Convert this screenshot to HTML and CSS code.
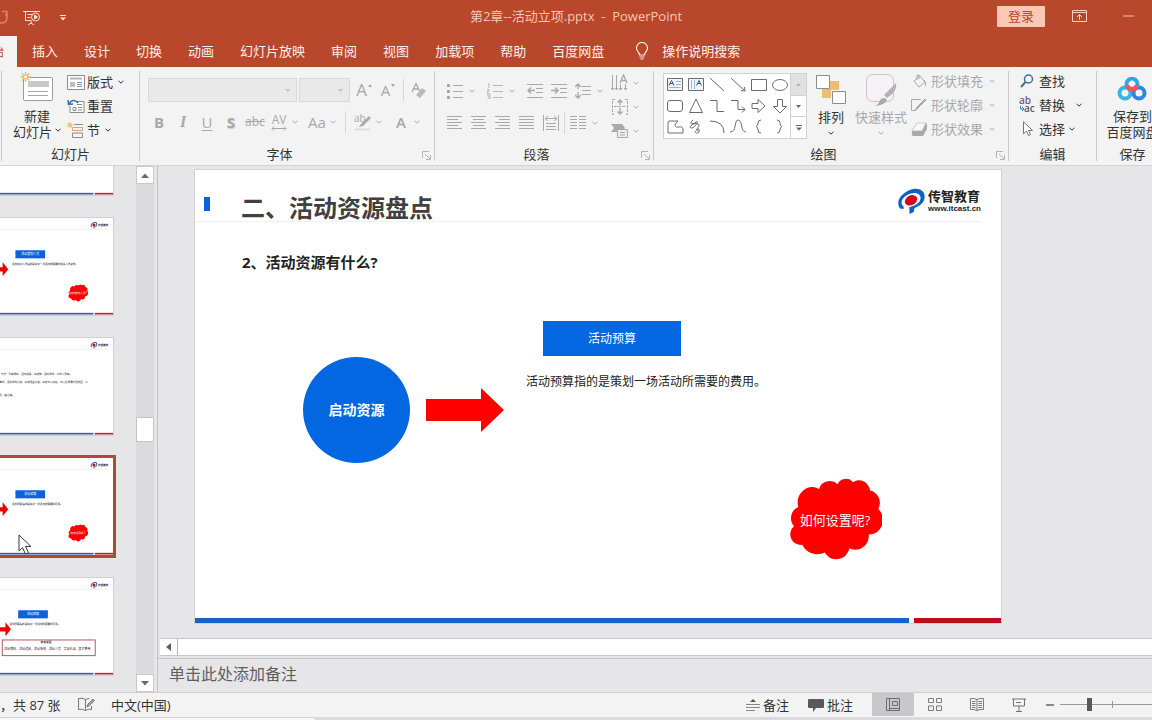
FILE: index.html
```html
<!DOCTYPE html>
<html lang="zh-CN">
<head>
<meta charset="utf-8">
<title>第2章--活动立项.pptx - PowerPoint</title>
<link rel="stylesheet" href="styles.css">
</head>
<body>
<svg class="defs" width="0" height="0" aria-hidden="true">
  <symbol id="caret" viewBox="0 0 6 4"><path d="M.5.7 3 3.2 5.5.7" fill="none" stroke="currentColor" stroke-width="1"/></symbol>
  <symbol id="launch" viewBox="0 0 9 9"><path d="M.5 7V.5H7M3 3l5 5M8.500 4v4.500H4" fill="none" stroke="#b5b5b7"/></symbol>
  <symbol id="mark" viewBox="0 0 82 76">
    <path d="M10 61C-4 45 6 20 34 7 58-4 80 4 81 24 82 43 66 53 51 59L49 70 37 76 36 56C56 52 70 41 69 28 67 12 47 11 31 20 13 30 8 45 19 54L20 61Z" fill="#0b62c6"/>
    <ellipse cx="41" cy="36" rx="19" ry="14" transform="rotate(-28 41 36)" fill="#d3081f"/>
  </symbol>
  <symbol id="cloud" viewBox="-4 -4 284 250"><path d="M27 82A44 48 0 0 1 90 27A33 30 0 0 1 146 13A26 24 0 0 1 192 7A34 38 0 0 1 244 32A36 38 0 0 1 269 88A42 44 0 0 1 240 165A40 42 0 0 1 182 206A42 46 0 0 1 107 219A50 48 0 0 1 39 196A32 32 0 0 1 14 140A34 36 0 0 1 27 82Z" fill="#fe0000"/></symbol>
  <symbol id="base" viewBox="0 0 806 453">
    <rect width="806" height="453" fill="#fff"/>
    <path d="M0 51H782" stroke="#e4e4e8" stroke-width="3"/>
    <rect y="445" width="714" height="10" fill="#2c5ba8"/><rect x="720" y="445" width="86" height="10" fill="#b3202f"/>
    <use href="#mark" x="698" y="16" width="36" height="32"/>
  </symbol>
  <symbol id="topic" viewBox="0 0 806 453">
    <path d="M231 230h55v-23l26 33-26 33v-23h-55z" fill="#e60000"/>
    <rect x="346" y="150" width="140" height="38" fill="#0a63dd"/>
  </symbol>
</svg>

<div class="app">
  <header class="titlebar">
    <div class="quick">
      <button aria-label="重复"><svg width="12" height="16" viewBox="0 0 12 16"><path d="M3 4A5 5 0 1 0 9 4M6 1.500h5v5" fill="none" stroke="#d98570" stroke-width="1.500"/></svg></button>
      <button aria-label="从头开始放映"><svg width="18" height="16" viewBox="0 0 18 16" fill="none" stroke="#ffe0d4"><path d="M0 1.500h17M2.500 2v8.500h6M4.500 4.500h5M4.500 7.500h3M8 11v3M5 15l3-2 3 2"/><circle cx="12.500" cy="7" r="4"/><path d="M11.500 5v4l3-2z" fill="#ffe0d4"/></svg></button>
      <button aria-label="自定义快速访问工具栏"><svg width="6" height="6" viewBox="0 0 6 6" fill="#ffe8df"><path d="M0 0h6v1H0zM0 2.500h6L3 5.500z"/></svg></button>
    </div>
    <h1 class="doc">第2章--活动立项.pptx&nbsp; -&nbsp; PowerPoint</h1>
    <div class="window">
      <button class="login">登录</button>
      <button aria-label="功能区显示选项"><svg width="15" height="12" viewBox="0 0 15 12" fill="none" stroke="#fbd3c6"><path d="M.5.5h14v11H.5zM.5 2.500h14M7.500 10V5M5 7l2.500-2.500L10 7"/></svg></button>
      <button aria-label="最小化"><svg width="11" height="2" viewBox="0 0 11 2"><path d="M0 1h11" stroke="#fbc6b6"/></svg></button>
    </div>
  </header>

  <nav class="tabs">
    <button class="tab active">开始</button><button class="tab">插入</button><button class="tab">设计</button><button class="tab">切换</button><button class="tab">动画</button><button class="tab">幻灯片放映</button><button class="tab">审阅</button><button class="tab">视图</button><button class="tab">加载项</button><button class="tab">帮助</button><button class="tab">百度网盘</button>
    <label class="tell"><svg width="14" height="18" viewBox="0 0 14 18" fill="none" stroke="#ffe9e0" stroke-width="1.200"><path d="M4.500 13C4.500 10 1.500 9.500 1.500 6a5.500 5.500 0 0 1 11 0c0 3.500-3 4-3 7zM4.500 15h5M5.500 17h3"/></svg><input type="text" placeholder="操作说明搜索" aria-label="操作说明搜索"></label>
  </nav>

  <section class="ribbon">
    <div class="group g-slides">
      <div class="body">
        <button class="big new"><svg width="34" height="32" viewBox="0 0 34 32"><rect x="3.500" y="6.500" width="29" height="23" rx="1" fill="#fff" stroke="#9a9a9c"/><rect x="8" y="10" width="21" height="6" fill="#c9c9cb"/><path d="M8 20.500h20M8 24.500h20" stroke="#a5a5a7"/><path d="M5.500 1v10M.5 6h10M2 2.500l7 7M9 2.500l-7 7" stroke="#efb765" stroke-width="1.300"/><circle cx="5.500" cy="6" r="2" fill="#fff" stroke="#efb765"/></svg><span>新建</span><span>幻灯片 <svg class="caret"><use href="#caret"/></svg></span></button>
        <div class="stack">
          <button><svg width="18" height="15" viewBox="0 0 18 15" fill="none" stroke="#8b8b8d"><path d="M.5.5h17v14H.5z" fill="#fff"/><path d="M3 3.500h12" stroke="#b5b5b7" stroke-width="2"/><path d="M3 7h5v5H3z" fill="#bdbdbf" stroke="none"/><path d="M10 7.500h5M10 9.500h5M10 11.500h5" stroke="#7d94b5"/></svg>版式<svg class="caret"><use href="#caret"/></svg></button>
          <button><svg width="18" height="15" viewBox="0 0 18 15" fill="none" stroke="#8b8b8d"><path d="M9 2.500h8v11H3V7" fill="#fff"/><path d="M10 5.500h5M6 8.500h3v3H6zM11 8.500h4M11 11h4"/><path d="M11 4C8 0 4 1 2 5M1 1l.5 4.500L6 5" stroke="#2d6db0" stroke-width="1.500"/></svg>重置</button>
          <button><svg width="18" height="16" viewBox="0 0 18 16" fill="none" stroke="#8b8b8d"><path d="M7 2.500h9M5.500 11v4.500h10V11z"/><path d="M5.500 5.500h10v3h-10z" stroke="#dfa27e"/><path d="M3 0v6M0 3h6M1 1l4 4M5 1L1 5" stroke="#efb765"/></svg>节<svg class="caret"><use href="#caret"/></svg></button>
        </div>
      </div>
      <div class="name">幻灯片</div>
    </div>

    <div class="group g-font dim">
      <div class="body rows">
        <div class="row">
          <select class="face" disabled aria-label="字体"><option></option></select>
          <select class="size" disabled aria-label="字号"><option></option></select>
          <button class="w24 grow" aria-label="增大字号">A<svg width="4" height="3" viewBox="0 0 4 3"><path d="M0 3l2-3 2 3z" fill="currentColor"/></svg></button>
          <button class="w24 shrink" aria-label="减小字号">A<svg width="4" height="3" viewBox="0 0 4 3"><path d="M0 0l2 3 2-3z" fill="currentColor"/></svg></button>
          <i class="rule thin"></i>
          <button class="w24" aria-label="清除格式"><svg width="16" height="17" viewBox="0 0 16 17"><path d="M1 10 5 1.500 9 10M2.500 7h5" fill="none" stroke="currentColor" stroke-width="1.300"/><path d="M5 13l6-7 4 3-6 7z" fill="#b9b9bb"/></svg></button>
        </div>
        <div class="row">
          <button class="w24"><b>B</b></button><button class="w24 italic">I</button><button class="w24 under">U</button><button class="w24 shade">S</button><button class="w24 strike">abc</button>
          <button class="w24 spacing" aria-label="字符间距"><span>AV</span><svg width="16" height="5" viewBox="0 0 16 5"><path d="M1 2.500h14M3 .5l-2 2 2 2M13 .5l2 2-2 2" fill="none" stroke="currentColor"/></svg></button><svg class="caret"><use href="#caret"/></svg>
          <button class="w24 case">Aa</button><svg class="caret"><use href="#caret"/></svg>
          <i class="rule"></i>
          <button class="w24" aria-label="突出显示"><svg class="loose" width="18" height="17" viewBox="0 0 18 17"><text x="0" y="8" font-size="10" fill="currentColor">ab</text><path d="M5 13l2-3 8-8 2 2-8 8z" fill="#aaaaac"/><path d="M1 15.500h15" stroke="#e4d9e3" stroke-width="2"/></svg></button><svg class="caret"><use href="#caret"/></svg>
          <button class="w24 ink">A</button><svg class="caret"><use href="#caret"/></svg>
        </div>
      </div>
      <div class="name">字体</div><button class="launch" aria-label="字体设置"><svg width="9" height="9"><use href="#launch"/></svg></button>
    </div>

    <div class="group g-para dim">
      <div class="body">
        <div class="rows">
          <div class="row">
            <button class="w24" aria-label="项目符号"><svg width="16" height="16" viewBox="0 0 16 16" fill="none" stroke="currentColor"><path d="M6 2.500h10M6 8.500h10M6 14.500h10"/><path d="M0 2.500h3M0 8.500h3M0 14.500h3" stroke-width="3"/></svg></button><svg class="caret"><use href="#caret"/></svg>
            <button class="w24 num" aria-label="编号"><svg width="16" height="16" viewBox="0 0 16 16" fill="none" stroke="currentColor"><path d="M6 2.500h10M6 8.500h10M6 14.500h10M1 1h1v4M0 6.500h2v2H0v2h3M0 12h3v4H0M1 14h2" stroke-width=".8"/></svg></button><svg class="caret"><use href="#caret"/></svg>
            <button class="w24" aria-label="减少缩进"><svg width="16" height="16" viewBox="0 0 16 16" fill="none" stroke="currentColor"><path d="M0 1.500h16M9 5.500h7M9 9.500h7M0 14.500h16"/><path d="M8 7.500H1M4 4.500l-3 3 3 3" stroke-width="1.500"/></svg></button>
            <button class="w24" aria-label="增加缩进"><svg width="16" height="16" viewBox="0 0 16 16" fill="none" stroke="currentColor"><path d="M0 1.500h16M9 5.500h7M9 9.500h7M0 14.500h16"/><path d="M0 7.500h7M4 4.500l3 3-3 3" stroke-width="1.500"/></svg></button>
            <button class="w24" aria-label="行距"><svg width="16" height="16" viewBox="0 0 16 16" fill="none" stroke="currentColor"><path d="M7 3.500h9M7 7.500h9M7 11.500h9"/><path d="M3 1v5M3 9v6M0 4l3-3 3 3M0 12l3 3 3-3" stroke-width="1.300"/></svg></button><svg class="caret"><use href="#caret"/></svg>
          </div>
          <div class="row">
            <button class="w24" aria-label="左对齐"><svg width="16" height="16" viewBox="0 0 16 16" stroke="currentColor"><path d="M0 1.500h15M0 4.500h11M0 7.500h15M0 10.500h11M0 13.500h15"/></svg></button>
            <button class="w24" aria-label="居中"><svg width="16" height="16" viewBox="0 0 16 16" stroke="currentColor"><path d="M0 1.500h15M2 4.500h11M0 7.500h15M2 10.500h11M0 13.500h15"/></svg></button>
            <button class="w24" aria-label="右对齐"><svg width="16" height="16" viewBox="0 0 16 16" stroke="currentColor"><path d="M0 1.500h15M4 4.500h11M0 7.500h15M4 10.500h11M0 13.500h15"/></svg></button>
            <button class="w24" aria-label="两端对齐"><svg width="16" height="16" viewBox="0 0 16 16" stroke="currentColor"><path d="M0 1.500h15M0 4.500h15M0 7.500h15M0 10.500h15M0 13.500h15"/></svg></button>
            <button class="w24" aria-label="分散对齐"><svg width="16" height="16" viewBox="0 0 16 16" fill="none" stroke="currentColor"><path d="M.5 0v16M15.500 0v16M3 8.500h10M3 11.500h10M3 14.500h10M2 3.500h12M5 1L2 3.500 5 6M11 1l3 2.500L11 6"/></svg></button>
            <i class="rule snug"></i>
            <button class="w24" aria-label="分栏"><svg width="16" height="16" viewBox="0 0 16 16" stroke="currentColor"><path d="M0 1.500h7M0 4.500h7M0 7.500h7M0 10.500h7M0 13.500h7M9 1.500h7M9 4.500h7M9 7.500h7M9 10.500h7M9 13.500h7"/></svg></button><svg class="caret"><use href="#caret"/></svg>
          </div>
        </div>
        <div class="stack">
          <button aria-label="文字方向"><svg width="18" height="18" viewBox="0 0 18 18" fill="none" stroke="currentColor"><path d="M1.500 1v15M5.500 1v15M9.500 10v6M14.500 10v6M0 14l1.500 2L3 14M4 14l1.500 2L7 14M8 14l1.500 2 1.500-2M13 14l1.500 2 1.500-2"/><path d="M9 9l3.500-8L16 9M10 6.500h5" stroke-width="1.300"/></svg><svg class="caret"><use href="#caret"/></svg></button>
          <button aria-label="对齐文本"><svg width="18" height="18" viewBox="0 0 18 18" fill="none" stroke="currentColor"><path d="M4 1.500H1.500v15H4M14 1.500h2.500v15H14M3 8.500h12" stroke-dasharray="3 1"/><path d="M9 2v5M9 10v6M6.500 4.500L9 2l2.500 2.500M6.500 13.500L9 16l2.500-2.500" stroke-width="1.400"/></svg><svg class="caret"><use href="#caret"/></svg></button>
          <button aria-label="转换为 SmartArt"><svg width="18" height="14" viewBox="0 0 18 14"><path d="M0 0h11l3 4-3 4H0l3-4z" fill="#a9a9ab"/><path d="M6.500 5.500h10v8h-10z" fill="#eee" stroke="currentColor"/><path d="M9 8.500h5M9 11h5" stroke="currentColor"/></svg><svg class="caret"><use href="#caret"/></svg></button>
        </div>
      </div>
      <div class="name">段落</div><button class="launch" aria-label="段落设置"><svg width="9" height="9"><use href="#launch"/></svg></button>
    </div>

    <div class="group g-draw">
      <div class="body">
        <div class="gallery">
          <svg viewBox="0 0 126 63" width="126" height="63" fill="none" stroke="#6c6c6e" role="img" aria-label="形状">
            <path d="M3.500 4.500h15v12h-15zM24.500 4.500h15v12h-15z" fill="#f4f6f9"/><path d="M5 11.500l2.500-5 2.500 5M6 9.500h3M32.500 11.500l2.500-5 2.500 5M33.500 9.500h3" stroke="#2f5c96"/><path d="M12 7.500h5M12 10.500h5M5 13.500h12M27.500 6v9M30.500 6v9" stroke="#9fb4d0"/>
            <path d="M46 4l14 13M67 4l14 13M77 16.500l4 .500-.500-4M87.500 5.500h15v11h-15z"/><ellipse cx="116" cy="11" rx="7.500" ry="5.500"/>
            <rect x="3.500" y="26.500" width="15" height="11" rx="2.500"/><path d="M25.500 38.500L32 25l6.500 13.500zM46 26.500h7v11h7M67 26.500h7v9h7M78 32.500l3 3-3 3M88 29.500h6v-4l7 6.500-7 6.500v-4h-6zM113.500 25.500h5v7h4l-6.500 6.500-6.500-6.500h4z"/>
            <path d="M5 47h9c-5 4-3 7 1 6q4-1 4 3v3H4V49zM29 46c-5 4 0 5 3 2 4-2-2 7-5 6-3-1 3-6 7-4 4 1-4 6 0 7M32 56q4-3 3 2-3 3-4-1M46 47q14 0 14 12M66 58c7 0 4-12 8-12 5 0 2 12 8 12M97 46q-3 0-3 3 0 3-2 3.500 2 .5 2 3.500 0 3 3 3M113 46q3 0 3 3 0 3 2 3.500-2 .5-2 3.500 0 3-3 3"/>
          </svg>
          <div class="gscroll">
            <button disabled aria-label="上一行"><svg width="5" height="3" viewBox="0 0 5 3"><path d="M0 3L2.500 0 5 3z" fill="#b4b4b6"/></svg></button>
            <button aria-label="下一行"><svg width="5" height="3" viewBox="0 0 5 3"><path d="M0 0h5L2.500 3z" fill="#666"/></svg></button>
            <button aria-label="更多形状"><svg width="6" height="6" viewBox="0 0 6 6"><path d="M0 0h6v1H0zM0 2.500h6L3 5.500z" fill="#666"/></svg></button>
          </div>
        </div>
        <button class="big arrange"><svg width="30" height="30" viewBox="0 0 30 30"><path d="M14 6h9v9h-9zM6 14h9v9H6z" fill="#ecbe72"/><path d="M.5.5h13v13H.5zM16.500 16.500h13v12h-13z" fill="#fff" stroke="#8d8d8f"/></svg><span>排列</span><svg class="caret"><use href="#caret"/></svg></button>
        <button class="big styles dim"><svg width="34" height="34" viewBox="0 0 34 34"><rect x="2.500" y="1.500" width="27" height="27" rx="6" fill="#f6f1f6" stroke="#c9c1c8"/><path d="M20 22 32 10q2 8-9 15z" fill="#b4b1b5"/><path d="M11 33q4-2 5-6 4-4 7 0-2 5-12 6z" fill="#aaa8ab"/></svg><span>快速样式</span><svg class="caret"><use href="#caret"/></svg></button>
        <div class="stack dim">
          <button><svg width="16" height="15" viewBox="0 0 16 15" fill="none" stroke="currentColor"><path d="M3 7l6-5 5 6-6 5zM6 6V1h2v4M13 6q3 5 1 6"/></svg>形状填充<svg class="caret"><use href="#caret"/></svg></button>
          <button><svg width="16" height="15" viewBox="0 0 16 15" fill="none" stroke="currentColor"><path d="M10 1.500H.5v11H4"/><path d="M4 13l2-4 8-8 1 1-8 8z" fill="#aaa"/></svg>形状轮廓<svg class="caret"><use href="#caret"/></svg></button>
          <button><svg width="16" height="15" viewBox="0 0 16 15"><path d="M1 10 5 2q1-1 2-1h8q1 0 1 2v4l-4 7H2q-2-1-1-4z" fill="#aaa8aa"/><path d="M1 9 5 2q1-1 2-1h8l-4 8z" fill="#f8f6f8" stroke="#b5b3b5" stroke-width=".6"/></svg>形状效果<svg class="caret"><use href="#caret"/></svg></button>
        </div>
      </div>
      <div class="name">绘图</div><button class="launch" aria-label="绘图设置"><svg width="9" height="9"><use href="#launch"/></svg></button>
    </div>

    <div class="group g-edit">
      <div class="body">
        <div class="stack">
          <button><svg width="16" height="14" viewBox="0 0 16 14" fill="none" stroke="#3f6ea5"><circle cx="9.500" cy="5" r="4" stroke-width="1.500"/><path d="M6.500 8L2 13" stroke-width="2"/></svg>查找</button>
          <button><svg class="loose" width="16" height="16" viewBox="0 0 16 16"><text x="0" y="7" font-size="10" font-weight="600" fill="#765296">ab</text><text x="5" y="15" font-size="10" font-weight="600" fill="#555b72">ac</text><path d="M1.500 9v3H4M3 10l2 2-2 2" fill="none" stroke="#3684c4"/></svg>替换<svg class="caret wide"><use href="#caret"/></svg></button>
          <button><svg width="16" height="16" viewBox="0 0 16 16"><path d="M4.500.8v12l3-2.600 2 4.500 2-1-2-4.200h4z" fill="#fff" stroke="#77777a"/></svg>选择<svg class="caret"><use href="#caret"/></svg></button>
        </div>
      </div>
      <div class="name">编辑</div>
    </div>

    <div class="group g-save">
      <div class="body">
        <button class="big"><svg width="30" height="26" viewBox="0 0 30 26" fill="none" stroke-width="4"><circle cx="8" cy="17" r="5.500" stroke="#35b5e4"/><circle cx="22" cy="17" r="5.500" stroke="#2f86dc"/><path d="M11 12a5.500 5.500 0 1 1 8 0" stroke="#2ea6e8"/><path d="M10 9q1 4 5 4t5-4M11 14l2-2M19 14l-2-2" stroke="#ee5564"/></svg><span>保存到</span><span>百度网盘</span></button>
      </div>
      <div class="name">保存</div>
    </div>
  </section>

  <main class="work">
    <aside class="pane">
      <div class="thumbs">
        <svg class="thumb" viewBox="0 0 806 453"><use href="#base"/></svg>
        <svg class="thumb" viewBox="0 0 806 453"><use href="#base"/><text class="t-brand" x="736" y="38">传智教育</text><use href="#topic"/><text class="t-box" x="416" y="174">活动策划人员</text><text class="t-line" x="330" y="218">活动策划人员指的是策划一场活动所需要的相关人员资源。</text><use href="#cloud" x="594" y="310" width="94" height="84"/><text class="t-cloud" x="640" y="358">如何安排人员?</text></svg>
        <svg class="thumb" viewBox="0 0 806 453"><use href="#base"/><text class="t-brand" x="736" y="38">传智教育</text><text class="t-line" x="278" y="170">方法：列举物料、活动道具、宣传物、活动场地、工作人员等。</text><text class="t-line" x="270" y="208">清单、活动场地分类、宣传用品分类、宣传中心对接，中心位置展示活动区、以</text><text class="t-line" x="270" y="270">及、其它等。</text></svg>
        <svg class="thumb selected" viewBox="0 0 806 453"><use href="#base"/><text class="t-brand" x="736" y="38">传智教育</text><use href="#topic"/><text class="t-box" x="416" y="174">活动预算</text><text class="t-line" x="330" y="218">活动预算指的是策划一场活动所需要的费用。</text><use href="#cloud" x="594" y="310" width="94" height="84"/><text class="t-cloud" x="640" y="358">如何设置呢?</text></svg>
        <svg class="thumb" viewBox="0 0 806 453"><use href="#base"/><text class="t-brand" x="736" y="38">传智教育</text><use href="#topic" x="13"/><text class="t-box" x="429" y="174">活动预算</text><text class="t-line" x="318" y="218">活动预算指的是策划一场活动所需要的费用。</text><rect x="284" y="290" width="438" height="74" fill="#fff" stroke="#a63a48" stroke-width="4"/><text class="t-head" x="490" y="306">参考项目</text><text class="t-list" x="294" y="336">活动物料、活动道具、活动场地、活动人员、奖品礼品、其它费用</text></svg>
      </div>
      <div class="vscroll">
        <button aria-label="向上"><svg width="8" height="5" viewBox="0 0 8 5"><path d="M0 5l4-4.500L8 5z" fill="#6a6a6c"/></svg></button>
        <div class="track"><div class="knob"></div></div>
        <button aria-label="向下"><svg width="8" height="5" viewBox="0 0 8 5"><path d="M0 0h8L4 4.500z" fill="#6a6a6c"/></svg></button>
      </div>
      <svg class="pointer" width="16" height="22" viewBox="0 0 16 22"><path d="M2 1v16l3.500-3.300 3 6.300 3-1.300-3-6.200H14z" fill="#fff" stroke="#333"/></svg>
    </aside>

    <div class="editor">
      <div class="stage">
        <article class="slide">
          <div class="heading"><i class="chip"></i><h2>二、活动资源盘点</h2>
            <div class="brand"><svg width="28" height="26"><use href="#mark"/></svg><div><strong>传智教育</strong><small>www.itcast.cn</small></div></div>
          </div>
          <h3>2、活动资源有什么?</h3>
          <div class="item circle">启动资源</div>
          <svg class="item arrow" viewBox="0 0 78 44"><path d="M0 11h55V0l23 22-23 22V33H0z" fill="#fe0000"/></svg>
          <div class="item budget">活动预算</div>
          <p class="item desc">活动预算指的是策划一场活动所需要的费用。</p>
          <div class="item burst"><svg width="94" height="84"><use href="#cloud"/></svg><span>如何设置呢?</span></div>
          <div class="bars"><i></i><i></i></div>
        </article>
      </div>
      <div class="hscroll"><button aria-label="向左"><svg width="5" height="8" viewBox="0 0 5 8"><path d="M5 0v8L0 4z" fill="#5f5f61"/></svg></button></div>
      <textarea class="notes" placeholder="单击此处添加备注" aria-label="备注"></textarea>
    </div>
  </main>

  <footer class="status">
    <span class="count">，共 87 张</span>
    <button class="spell" aria-label="拼写检查"><svg width="17" height="15" viewBox="0 0 17 15" fill="none" stroke="#777779"><path d="M7.500 2.500Q4 .5.500 1.500v11q4-1 7 1 3-2 6-1V9M7.500 2.500v11M7.500 2.500q2-1 4-1"/><path d="M9 10l1-3 5-5 1.500 1.500-5 5z" fill="#aaa"/></svg></button>
    <button>中文(中国)</button>
    <div class="right">
      <button class="tool"><svg width="14" height="13" viewBox="0 0 14 13"><path d="M7 1l3 3H4z" fill="#555"/><path d="M0 6.500h14M0 9.500h14M0 12.500h9" stroke="#88888b"/></svg>备注</button>
      <button class="tool"><svg width="16" height="14" viewBox="0 0 16 14"><path d="M1 1h14q1 0 1 1v7q0 1-1 1H8l-3 4v-4H1q-1 0-1-1V2q0-1 1-1z" fill="#58585a"/></svg>批注</button>
      <button class="view on" aria-label="普通视图"><svg width="14" height="13" viewBox="0 0 14 13" fill="none" stroke="#6d6d6f"><path d="M.5.5h13v12H.5zM3.500 1v12M6.500 3.500h5v4h-5zM4 10.500h10"/></svg></button>
      <button class="view" aria-label="幻灯片浏览"><svg width="14" height="13" viewBox="0 0 14 13" fill="none" stroke="#7b7b7d"><path d="M.5.5h5v4h-5zM8.500.5h5v4h-5zM.5 8h5v4.500h-5zM8.500 8h5v4.500h-5z"/></svg></button>
      <button class="view" aria-label="阅读视图"><svg width="14" height="13" viewBox="0 0 14 13" fill="none" stroke="#7b7b7d"><path d="M7 1.500Q4 0 .5.500v11q3.500-.500 6.500 1 3-1.500 6.500-1V.500Q10 0 7 1.500v11M2 3.500h3.500M2 5.500h3.500M2 7.500h3.500M2 9.500h3.500M8.500 3.500H12M8.500 5.500H12M8.500 7.500H12M8.500 9.500H12"/></svg></button>
      <button class="view" aria-label="幻灯片放映"><svg width="14" height="14" viewBox="0 0 14 14" fill="none" stroke="#737375"><path d="M0 1h14M1.500 1v7h11V1M4 4.500h5M7 8v5M4 13.500h6"/></svg></button>
      <button class="minus" aria-label="缩小"><svg width="8" height="2" viewBox="0 0 8 2"><path d="M0 1h8" stroke="#666" stroke-width="1.500"/></svg></button>
      <input class="zoom" type="range" min="0" max="100" value="27" aria-label="缩放">
    </div>
  </footer>
  <div class="edge"><i></i></div>
</div>
</body>
</html>
```

FILE: styles.css
```css
* { box-sizing: border-box; }
body { margin: 0; overflow: hidden; font: 13px/16px "Open Sans", "Noto Sans CJK SC", sans-serif; color: #333; }
button { border: 0; padding: 0; background: none; font: inherit; color: inherit; white-space: nowrap; display: flex; align-items: center; justify-content: center; flex: none; }
svg { flex: none; display: block; }
h1, h2, h3, p { margin: 0; }
.defs { position: absolute; }
.loose { overflow: visible; }
.app { height: 100vh; display: flex; flex-direction: column; background: #e6e6e8; }

/* title bar */
.titlebar { height: 36px; flex: none; background: #b8472c; display: grid; grid-template-columns: 1fr auto 1fr; align-items: center; padding-bottom: 4px; }
.quick { display: flex; align-items: center; gap: 15px; margin-left: -4px; padding-top: 3px; }
.quick button:last-child { margin-left: 4px; }
.doc { font-size: 13px; font-weight: 400; color: #f7c6b6; }
.window { display: flex; align-items: center; justify-content: flex-end; gap: 27px; padding-right: 18px; }
.window button:last-child { margin-left: 9px; }
.login { width: 48px; height: 21px; background: #fcc8b5; color: #b8472c; border-radius: 1px; }

/* ribbon tabs */
.tabs { height: 31px; flex: none; background: #b8472c; display: flex; margin-left: -35px; color: #fff0ea; }
.tab { padding: 0 13px 2px; }
.tab.active { background: #f3f3f4; color: #b8472c; margin-right: 2px; }
.tell { display: flex; align-items: center; gap: 13px; margin-left: 18px; flex: 1; padding-bottom: 2px; }
.tell input { flex: 1; border: 0; padding: 0; background: none; font: inherit; outline: 0; }
.tell input::placeholder { color: #fff0ea; opacity: 1; }

/* ribbon */
.ribbon { height: 99px; flex: none; display: flex; background: #f3f3f4; border-bottom: 1px solid #d4d4d6; padding: 4px 0; overflow: hidden; }
.group { flex: none; display: grid; grid-template-columns: 1fr auto; grid-template-rows: 75px 15px; border-right: 1px solid #c9c9cb; }
.body { grid-column: 1 / -1; display: flex; align-items: flex-start; }
.name { text-align: center; line-height: 17px; }
.launch { width: 15px; padding-top: 4px; }
.dim { color: #a8a8aa; }
.dim .name { color: #333; }
.caret { width: 6px; height: 4px; margin: 0 2px; }
.big { flex-direction: column; justify-content: flex-start; line-height: 16px; }
.big span { display: flex; align-items: center; }
.stack { display: flex; flex-direction: column; }
.stack button { height: 24px; justify-content: flex-start; gap: 4px; }
.w24 { width: 24px; height: 24px; }
.rule { width: 1px; height: 22px; background: #d6d6d8; margin: 0 5px; }
.rule.thin { margin: 0 3px; }
.rule.snug { margin: 0 1px; }
.rows { display: flex; flex-direction: column; align-items: flex-start; gap: 8px; }
.row { display: flex; align-items: center; height: 24px; }

.g-slides { width: 139px; border-left: 1px solid #c9c9cb; margin-left: 1px; }
.new { width: 50px; margin-left: 10px; }
.new svg:first-child { margin-bottom: 5px; }
.new .caret { margin: 0 0 0 3px; }
.g-slides .stack { padding-left: 5px; margin-top: -1px; }
.g-slides .stack button { gap: 2px; }
.g-slides .stack .caret { margin-left: 3px; }

.g-font { width: 295px; }
.g-font .body { padding: 7px 0 0 7px; }
select {
  appearance: none; height: 24px; border: 1px solid #cfcfd1; border-radius: 0; margin-right: 2px;
  background:
    linear-gradient(45deg, transparent 50%, #b4b4b6 50%) no-repeat right 8px center / 3px 3px,
    linear-gradient(-45deg, transparent 50%, #b4b4b6 50%) no-repeat right 5px center / 3px 3px,
    #e5e5e7;
}
.face { width: 149px; margin-left: 1px; }
.size { width: 51px; }
.grow, .shrink { gap: 1px; }
.grow svg, .shrink svg { margin-bottom: 10px; }
.g-font .row { font-size: 15px; }
.g-font .row .grow { font-size: 17px; }
.g-font .caret { margin: 0 4px 0 1px; }
.italic { font: italic 700 16px "Liberation Serif", serif; }
.under { text-decoration: underline; text-underline-offset: 2px; }
.shade { font-weight: 700; text-shadow: 1px 1px 1px #ccc; }
.g-font .strike { font-size: 12px; text-decoration: line-through; }
.spacing { flex-direction: column; font-size: 12px; line-height: 12px; }
.case, .ink { margin-left: 3px; }
.ink { font-weight: 600; }

.g-para { width: 219px; }
.g-para .body { padding-left: 8px; }
.g-para .rows { width: 168px; padding-top: 8px; }
.g-para .caret { margin: 0 3px 0 2px; }
.g-para .row .caret + button { margin-left: 5px; }
.g-para .stack button { gap: 2px; }

.g-draw { width: 355px; }
.g-draw .body { padding-left: 9px; }
.gallery { display: flex; background: #fff; border: 1px solid #d2d2d4; height: 66px; margin-top: 2px; }
.gscroll { width: 16px; display: flex; flex-direction: column; border-left: 1px solid #d2d2d4; }
.gscroll button { flex: 1; border-bottom: 1px solid #d2d2d4; }
.gscroll button:last-child { border: 0; }
.gscroll button:disabled { background: #e1e1e3; }
.arrange { width: 48px; padding-top: 4px; }
.arrange > svg:first-child { margin-bottom: 4px; }
.styles { width: 52px; padding-top: 2px; }
.styles > svg:first-child { margin-bottom: 2px; }
.big > .caret { margin-top: 6px; }
.g-draw .stack { margin: -2px 0 0 4px; }

.g-edit { width: 88px; }
.g-edit .stack { padding-left: 10px; margin-top: -2px; }
.g-edit .caret { margin: 0; }
.g-edit .wide { margin-left: 7px; }
.g-save { width: 71px; border: 0; }
.g-save .body { justify-content: center; }
.g-save .big { padding-top: 5px; }
.g-save .big > svg { margin-bottom: 6px; }

/* slide list */
.work { flex: 1; min-height: 0; display: flex; }
.pane { position: relative; width: 158px; flex: none; display: flex; justify-content: space-between; overflow: hidden; border-right: 1px solid #c4c4c6; padding-right: 3px; }
.thumbs { display: flex; flex-direction: column; gap: 23px; margin: -68px 0 0 -58px; }
.thumb { width: 171px; height: 97px; background: #fff; outline: 1px solid #cfcfd1; }
.thumb.selected { outline: 3px solid #b04a33; }
.t-brand { font-size: 12px; font-weight: 700; fill: #222; }
.t-box { font-size: 14px; fill: #fff; text-anchor: middle; }
.t-line { font-size: 12px; fill: #222; }
.t-list { font-size: 14px; fill: #222; }
.t-head { font-size: 13px; fill: #222; text-anchor: middle; font-weight: 700; }
.t-cloud { font-size: 13px; fill: #fff; text-anchor: middle; }
.vscroll { width: 18px; display: flex; flex-direction: column; background: #dbdbdd; }
.vscroll button { height: 18px; background: #fff; border: 1px solid #c9c9cb; }
.track { flex: 1; display: flex; flex-direction: column; }
.track::before, .track::after { content: ""; flex: 1; }
.knob { height: 25px; background: #fff; border: 1px solid #c4c4c6; }
.pointer { position: absolute; left: 17px; top: 368px; }

/* editor */
.editor { flex: 1; min-width: 0; display: flex; flex-direction: column; }
.stage { flex: 1; min-height: 0; padding: 4px 37px; overflow: hidden; }
.slide { position: relative; width: 806px; height: 453px; background: #fff; box-shadow: 0 0 0 1px #d2d2d4; color: #222; display: flex; flex-direction: column; }
.heading { display: flex; align-items: center; height: 52px; padding: 17px 0 0 9px; margin-right: 20px; border-bottom: 1px solid #f1f1f3; }
.chip { width: 6px; height: 14px; background: #0a62d8; margin-right: 31px; }
h2 { font-size: 24px; line-height: 32px; color: #404040; padding-top: 8px; flex: 1; }
.brand { display: flex; gap: 3px; padding-bottom: 6px; }
.brand div { display: flex; flex-direction: column; }
.brand strong { font-size: 13px; line-height: 16px; }
.brand small { font: 700 8px/10px "Liberation Sans", sans-serif; }
h3 { font-size: 15px; line-height: 24px; padding: 28px 0 0 47px; }
.item { position: absolute; }
.circle { left: 108px; top: 187px; width: 107px; height: 106px; border-radius: 50%; background: #0467e2; color: #fff; font-size: 14px; font-weight: 700; display: grid; place-items: center; }
.arrow { left: 231px; top: 218px; width: 78px; height: 44px; }
.budget { left: 348px; top: 151px; width: 138px; height: 35px; background: #0467e2; color: #fff; font-size: 12px; display: grid; place-items: center; }
.desc { left: 331px; top: 204px; font-size: 12px; }
.burst { left: 593px; top: 308px; width: 94px; height: 84px; display: grid; place-items: center; color: #fff; }
.burst > * { grid-area: 1 / 1; }
.bars { margin-top: auto; display: flex; gap: 5px; height: 5px; }
.bars i { flex: 714; background: #1563c8; }
.bars i + i { flex: 87; background: #c00b20; }
.hscroll { height: 18px; flex: none; display: flex; border: 1px solid #c6c6c8; border-width: 1px 0; background: #fff; margin: 0 0 2px 2px; }
.hscroll button { width: 18px; border-right: 1px solid #b5b5b7; }
.notes { flex: none; height: 34px; border: 0; border-top: 1px solid #c6c6c8; background: #e6e6e8; resize: none; padding: 3px 11px; font: 16px/24px "Open Sans", "Noto Sans CJK SC", sans-serif; outline: 0; display: block; }
.notes::placeholder { color: #5e5e60; opacity: 1; }

/* status bar */
.status { height: 25px; flex: none; display: flex; align-items: center; background: #f3f3f4; border-top: 1px solid #d0d0d2; overflow: hidden; white-space: nowrap; padding-bottom: 1px; }
.count { width: 78px; }
.spell { margin-right: 16px; }
.right { margin-left: auto; display: flex; align-items: center; align-self: stretch; }
.tool { gap: 3px; margin-right: 19px; }
.view { width: 42px; align-self: stretch; }
.view.on { background: #c8c8ca; }
.minus { width: 20px; }
.zoom { appearance: none; width: 104px; height: 14px; margin: 0 -12px 0 0; background: linear-gradient(#999, #999) center / 100% 1px no-repeat, linear-gradient(#999, #999) center / 1px 7px no-repeat; }
.zoom::-webkit-slider-thumb { appearance: none; width: 5px; height: 13px; background: #59595b; }
.edge { height: 3px; flex: none; background: #dadae0; }
.edge i { display: block; width: 314px; height: 3px; background: #f8f8fa; border-top: 1px solid #cfcfd4; }
```
